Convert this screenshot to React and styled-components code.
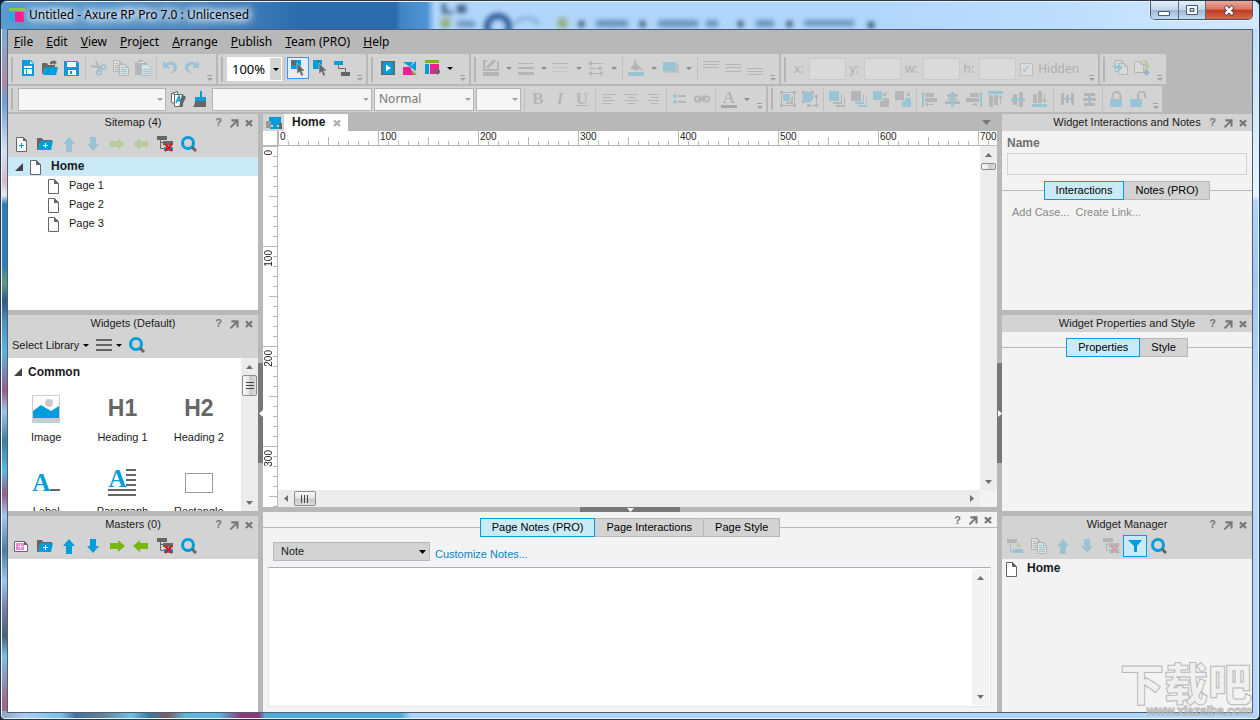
import React from 'react'
import styled, { createGlobalStyle, css } from 'styled-components'

const BLUE = '#009ddc'
const GRAY = '#666666'
const GREEN = '#76b80e'
const PINK = '#ef1f8f'

const UI_FONT = '"Liberation Sans", Arial, sans-serif'
const SYSTEM_FONT = '"Noto Sans", "Segoe UI", sans-serif'

const GlobalStyle = createGlobalStyle`
  * { box-sizing: border-box; }
  body {
    margin: 0;
    font: 11px/13px ${UI_FONT};
    color: #1a1a1a;
    background: #14233c;
  }
  button, input, select, textarea {
    margin: 0;
    padding: 0;
    font: inherit;
    color: inherit;
  }
`

/* ---------- icons ---------- */

const Pointer = ({ x = 7, y = 3 }) => (
  <path transform={`translate(${x} ${y})`} fill={GRAY} stroke="#dde" strokeWidth=".5" d="M0 0v11l2.5-2.3L4.3 13l2.2-1-1.8-4H8z" />
)

const PageLines = ({ x, y, accent }) => (
  <g transform={`translate(${x} ${y})`}>
    <path d="M.5.5h6l3 3v8h-9z" fill="#fff" stroke={GRAY} />
    <path d="M6.5.5v3h3M2 5.5h6M2 7.5h6M2 9.5h6M2 3.5h3" fill="none" stroke={accent || GRAY} />
  </g>
)

const BlankPage = ({ x, y }) => (
  <g transform={`translate(${x} ${y})`}>
    <path d="M.5.5h6l3 3v8h-9z" fill="#eee" stroke={GRAY} />
    <path d="M6.5.5v3h3" fill="none" stroke={GRAY} />
  </g>
)

const Cross = () => (
  <path d="M8 8l7 7M15 8l-7 7" stroke="#f00d0d" strokeWidth="2.2" fill="none" />
)

const Stack = ({ front, back }) => (
  <g>
    <path fill={front} d="M0 0h10v10H0z" />
    <path fill={back} d="M12 3h1v10H4v-2h8zM15 6h1v10H7v-2h8z" />
  </g>
)

const ICONS = {
  newFile: <g><path fill={BLUE} d="M2 0h9l3 4v12H2z" /><path fill="#fff" d="M4 6h8v2H4zM4 9h2v5H4zM7 9h5v5H7zM10 1l3 3h-3z" /></g>,
  open: <g><path fill={GRAY} d="M0 3h5l1 2h7v3H3L1 14H0zM8 4c0-3 2-3.5 4-3V0l3 2.5L12 5V3.5c-1.5 0-2 0-2.5 1z" /><path fill={BLUE} d="M3.5 7H16l-2 8H1z" /></g>,
  save: <g><path fill={BLUE} d="M0 1h13l2 2v13H0z" /><path fill="#fff" d="M3 2h9v5H3zM4 10h8v5H4z" /><path fill={BLUE} d="M6 11h2v3H6z" /></g>,
  cut: <g fill="none"><g stroke={BLUE} strokeWidth="1.8"><circle cx="12.5" cy="7" r="2.2" /><circle cx="8" cy="12.5" r="2.2" /></g><path stroke={GRAY} strokeWidth="2" d="M0 6l10.5 1.5M5 1l3.5 9.5" /></g>,
  copy: <g><PageLines x={0} y={0} /><PageLines x={6} y={4} accent={BLUE} /></g>,
  paste: <g><path fill={GRAY} d="M0 2h3V0h5v2h4v13H0z" /><path fill="#fff" d="M3 2h6v1H3z" /><g transform="translate(6 4)"><path d="M.5.5h6l3 3v8h-9z" fill="#fff" stroke={BLUE} /><path d="M2 5.5h6M2 7.5h6M2 9.5h6" stroke={BLUE} /></g></g>,
  undo: <path fill={BLUE} d="M1 1v7h7L5.6 5.6C8 4 12 4.5 12 8c0 2.5-2 4-4 6 4-1 7-3.5 7-7C15 2 8 0 3.8 3.5z" />,
  redo: <path fill={BLUE} d="M15 1v7H8l2.4-2.4C8 4 4 4.5 4 8c0 2.5 2 4 4 6-4-1-7-3.5-7-7C1 2 8 0 12.2 3.5z" />,
  selectTouch: <g><path fill={BLUE} d="M1 0h10v9H1z" /><path fill={GRAY} d="M1 0h5v5H1z" /><Pointer /></g>,
  selectInside: <g><path fill={BLUE} d="M1 0h9v9H1z" /><path fill={GRAY} d="M6 0h1v4H6z" /><Pointer /></g>,
  connector: <g><path fill={BLUE} d="M0 1h9v4H0z" /><path fill={GRAY} d="M7 12h9v4H7z" /><path d="M4.5 5v3.5h7V12" fill="none" stroke={GRAY} /></g>,
  preview: <g><path fill={GRAY} d="M1 1h14v14H1z" /><path fill={BLUE} d="M3 2h10v12H3z" /><path fill="#fff" d="M6 4.5L11 8l-5 3.5z" /></g>,
  share: <g><path fill={BLUE} d="M1 2h10L8 7z" /><path fill={BLUE} d="M14 1v10L8 7z" /><path fill={PINK} d="M1 15V7h7l4 8z" /><path fill={GREEN} d="M11 10l4 5h-3z" /></g>,
  generate: <g><path fill={GREEN} d="M1 0h14v3H1z" /><path fill={BLUE} d="M1 4h4v10H1z" /><path fill={PINK} d="M6 4h9v10H6z" /><path fill={GRAY} d="M9 10h4V8l4 3.5L13 15v-2H9z" /></g>,
  lineColor: <g><path d="M1 1v9h14V1" fill="none" stroke={GRAY} strokeWidth="2" /><path d="M4 8l8-8" stroke={GRAY} strokeWidth="3" /><path fill={GRAY} d="M0 12h16v4H0zM0 0h4v2H0z" /></g>,
  lineWidth: <path fill={GRAY} d="M0 3h16v1H0zM0 7h16v2H0zM0 12h16v3H0z" />,
  lineStyle: <g stroke={GRAY}><path d="M0 3.5h16" /><path d="M0 7.5h16" strokeDasharray="2 1" /><path d="M0 11.5h16" strokeDasharray="1 1" /></g>,
  arrows: <g><path d="M2 3.5h13M1 8.5h13M2 13.5h13" stroke={GRAY} /><path fill={GRAY} d="M0 3.5L4 1v5zM15 8.5L11 6v5zM0 13.5L4 11v5zM15 13.5L12 11v5z" /></g>,
  fill: <g><path fill={GRAY} d="M6 0h2v3l5 5-5 3-6-3 4-4zM13 7c2 2 2 3 1.5 4-1 .5-2-1-1.5-4z" /><path fill={BLUE} d="M0 12h16v4H0z" /></g>,
  shadow: <g><path fill={GRAY} opacity=".6" d="M2 4h14v9H2z" /><path fill={BLUE} d="M0 2h13v9H0z" /></g>,
  top: <path fill={GRAY} d="M0 1h16v1H0zM0 4h16v1H0zM0 7h16v1H0z" />,
  middle: <path fill={GRAY} d="M0 4h16v1H0zM0 7h16v1H0zM0 11h16v1H0z" />,
  bottom: <path fill={GRAY} d="M0 8h16v1H0zM0 11h16v1H0zM0 14h16v1H0z" />,
  masterOut: <g><BlankPage x={3} y={0} /><BlankPage x={6} y={3} /><path fill={BLUE} d="M0 5c3 0 4 1 6 1V3l5 4.5L6 12V9C3 9 1 8 0 5z" /></g>,
  masterIn: <g><BlankPage x={0} y={1} /><path d="M8 4.500h3.500V12M9 5" stroke={GRAY} fill="none" /><path fill={GREEN} d="M8 0c5 0 7 2 6.5 6H16l-2.5 3.5L10 7h2c0-3-1-5-4-7z" /><path fill="#0060b8" d="M12.5 9l3.5 3.5-3.5 3.5L9 12.500z" /></g>,
  styles: <g><path d="M1.5 2.5l6-2v3M4.5 3.5h8v12h-8z" fill="#fff" stroke={GRAY} /><path d="M1.5 2.5v9l3 1V3z" fill="#fff" stroke={GRAY} /><path d="M6 12l3-7 1.5 6M6.5 9.5h4" stroke={BLUE} fill="none" strokeWidth="1.5" /><path fill={GRAY} d="M12 3l4 3-4 9-3 1z" /></g>,
  brush: <g><path fill={BLUE} d="M8 0h2v6h4v4H3V6h5z" /><path fill={GRAY} d="M3 10h11v6H1c1.5-2 2-4 2-6z" /></g>,
  left: <path fill={GRAY} d="M2 3h12v1H2zM2 6h8v1H2zM2 9h12v1H2zM2 12h8v1H2z" />,
  center: <path fill={GRAY} d="M2 3h13v1H2zM5 6h7v1H5zM2 9h13v1H2zM5 12h7v1H5z" />,
  right: <path fill={GRAY} d="M2 3h12v1H2zM6 6h8v1H6zM2 9h12v1H2zM6 12h8v1H6z" />,
  bullets: <g><circle cx="3" cy="5" r="2" fill={BLUE} /><circle cx="3" cy="11" r="2" fill={BLUE} /><path fill={GRAY} d="M6 4h8v2H6zM6 10h8v2H6z" /></g>,
  link: <g fill="none" stroke={GRAY} strokeWidth="2"><rect x="1" y="5.5" width="6" height="5" rx="2" /><rect x="9" y="5.5" width="6" height="5" rx="2" /><path d="M4 8h8" /></g>,
  group: <g><path d="M1.5 1.5h13v13h-13z" fill="none" stroke={GRAY} /><path fill={GRAY} d="M0 0h3v3H0zM13 0h3v3h-3zM0 13h3v3H0zM13 13h3v3h-3zM11 6h2v7H6v-2h5z" /><path fill={BLUE} d="M3 3h7v7H3z" /></g>,
  ungroup: <g><path d="M7 14.5h7.5V6" fill="none" stroke={GRAY} /><path fill={GRAY} d="M0 0h3v3H0zM9 0h3v3H9zM0 9h3v3H0zM13 4h3v3h-3zM13 13h3v3h-3zM5 13h3v3H5z" /><circle cx="6" cy="6" r="5.5" fill={BLUE} /></g>,
  front: <Stack front={BLUE} back={GRAY} />,
  back: <Stack front={GRAY} back={BLUE} />,
  forward: <g><path fill={BLUE} d="M0 0h9v9H0z" /><path fill={GRAY} d="M7 10h3V7h6v9H7zM10 5V1l1.5 1.5C13 1 15 1 16 2c-2 0-3 0-3.5 1.5L14 5z" /></g>,
  backward: <g><path fill={GRAY} d="M0 0h9v9H0zM15 5V1l-1.5 1.5C12 1 11 1 10 2c2 0 2 0 2.5 1.5L11 5z" /><path fill={BLUE} d="M7 10h3V7h6v9H7z" /></g>,
  alignLeft: <g><path fill={BLUE} d="M0 1h2v15H0z" /><path fill={GRAY} d="M3 2h9v4H3zM3 7h12v4H3zM3 13.500l3-2v1.500h6v1H6v1.500z" /></g>,
  alignCenter: <g><path fill={GRAY} d="M3 3h11v3H3zM1 10h15v3H1z" /><path fill={BLUE} d="M7 1h3v15H7zM4 7h9v2H4z" /></g>,
  alignRight: <g><path fill={BLUE} d="M14 1h2v15h-2z" /><path fill={GRAY} d="M4 2h9v4H4zM0 7h13v4H0zM12 13.500l-3-2v1.500H5v1h4v1.500z" /></g>,
  alignTop: <g><path fill={BLUE} d="M0 0h15v3H0z" /><path fill={GRAY} d="M1 4h4v12H1zM6 4h4v10H6zM12.500 4l2.500 3h-2v6h-1V7h-2z" /></g>,
  alignMiddle: <g><path fill={GRAY} d="M3 3h4v11H3zM9 1h4v15H9z" /><path fill={BLUE} d="M1 7h14v3H1z" /></g>,
  alignBottom: <g><path fill={BLUE} d="M0 13h15v3H0z" /><path fill={GRAY} d="M1 3h4v9H1zM6 0h4v12H6zM12.500 12l2.500-3h-2V3h-1v6h-2z" /></g>,
  distH: <g><path fill={GRAY} d="M2 2h3v12H2zM7 4h3v8H7zM12 2h3v12h-3z" /><path fill={BLUE} d="M5 7h7v2H5z" /></g>,
  distV: <g><path fill={GRAY} d="M3 2h11v3H3zM2 7h13v3H2zM3 12h11v3H3z" /><path fill={BLUE} d="M7 5h3v2H7zM7 10h3v2H7z" /></g>,
  lock: <g><path d="M4.5 8V5a4 4 0 0 1 8 0v3" fill="none" stroke={GRAY} strokeWidth="2" /><path fill={BLUE} d="M2 8h12v8H2z" /></g>,
  unlock: <g><path d="M8 8V4a3.5 3.5 0 0 1 7 0v3" fill="none" stroke={GRAY} strokeWidth="2" /><path fill={BLUE} d="M0 8h12v8H0z" /></g>,
  addPage: <g><path d="M3.5 1.5h7l3 3v11h-10z" fill="#fff" stroke={GRAY} /><path fill={GRAY} d="M10 1l4 4h-4z" /><path stroke={BLUE} d="M6 9.5h5M8.5 7v5" /></g>,
  addFolder: <g><path fill={GRAY} d="M0 2h5l1 2h9v3H3l-2 7H0z" /><path fill={BLUE} d="M3.5 5H16l-2 9H1z" /><path stroke="#fff" d="M6 9.5h5M8.5 7v5" /></g>,
  up: <path fill={BLUE} d="M8 1l6 7h-3v8H5V8H2z" />,
  down: <path fill={BLUE} d="M8 15l6-7h-3V1H5v7H2z" />,
  indent: <path fill={GREEN} d="M16 8L9 2v3H1v6h8v3z" />,
  outdent: <path fill={GREEN} d="M0 8l7-6v3h8v6H7v3z" />,
  remove: <g><path fill={GRAY} d="M0 0h10v4H0zM6 5h10v4H6z" /><path d="M3.5 4v8.5H8M3.5 6.5H6" fill="none" stroke={GRAY} /><path fill={BLUE} d="M7 11h9v4H7z" /><Cross /></g>,
  search: <g><circle cx="7" cy="7" r="5.5" fill="none" stroke={BLUE} strokeWidth="3" /><path d="M11 11l4 4" stroke={GRAY} strokeWidth="3" /></g>,
  addMaster: <g><path d="M1.5 3.5h10l3 3v7h-13z" fill="#fff" stroke={GRAY} /><path fill="#ee83d7" d="M3 5h8v7H3z" /><path fill={GRAY} d="M11 3l4 4h-4z" /><path stroke="#fff" d="M5 8.5h5M7.5 6v5" /></g>,
  addState: <g><path fill={GRAY} d="M0 1h10v4H0z" /><path d="M3.5 5v8.5H6" fill="none" stroke={GRAY} /><path fill={BLUE} d="M6 11h10v4H6z" /><path stroke={GREEN} d="M9 7.5h5M11.5 5v5" /></g>,
  filter: <path fill={BLUE} d="M1 2h14L10 8v6H7V8z" />,
  menuLines: <path fill={GRAY} d="M0 2h16v2H0zM0 7h16v2H0zM0 12h16v2H0z" />,
  page: <g><path d="M3.5 1.5h6l4 4v10h-10z" fill="#fff" stroke={GRAY} /><path fill={GRAY} d="M9 1l5 5H9z" /></g>,
  twisty: <path fill="#444" d="M12 4v8H4z" />,
  dock: <path d="M5 5h7v7M12 5l-8 8" fill="none" stroke="currentColor" strokeWidth="2.4" />,
  close: <path d="M4.5 5l7 6.5M11.5 5l-7 6.5" stroke="currentColor" strokeWidth="2.5" />,
  device: <g><path fill={BLUE} d="M3 2h12v8H3zM7 10h4v2H7zM4 12h9v2H4z" /><path fill="#999" d="M0 6h5v7H0z" /><path fill={GRAY} d="M13 8h3v6h-3z" /></g>
}

const Svg = styled.svg`
  flex: none;
  display: block;
`

const Icon = ({ name, size = 16 }) => (
  <Svg width={size} height={size} viewBox="0 0 16 16" aria-hidden="true">{ICONS[name]}</Svg>
)

const Caret = styled.span`
  flex: none;
  border: solid transparent;
  border-width: 3px 3px 0;
  border-top-color: ${p => p.$color || '#000'};
`

/* ---------- window chrome ---------- */

const Window = styled.div`
  position: relative;
  display: flex;
  flex-direction: column;
  height: 100vh;
  min-height: 480px;
  padding: 0 7px 7px;
  overflow: hidden;
  border: 1px solid #2b3648;
  border-radius: 7px 7px 5px 5px;
  box-shadow: inset 0 0 0 1px #e8f4ff;
  background:
    linear-gradient(90deg, #8fa3c0 0, #a9cdf5 24px, #7cc0e8 60px, #44719d 75px, #60808f 100px, #71c1de 130px, #3f78a3 148px, #7c5c5c 166px, #5fb6dc 185px, #5fb6dc 218px, #8b3a7a 240px, #8b3a7a 258px, #50a9d8 264px, #50a9d8 400px, #b0d5fa 410px) bottom / 100% 8px no-repeat,
    linear-gradient(180deg, #5b9bd0 0, #86a9cc 40px, #b38aa4 80px, #6f9ed0 100px, #d6e2f5 150px, #d5b8c9 180px, #e8edf8 194px, #2e7eb9 203px, #2e7eb9 265px, #5c9e7c 282px, #30588c 300px, #4d8fbd 320px, #58b6e0 350px, #9c5c87 390px, #9cc4ee 410px, #3e7ea2 440px, #59b9e2 470px, #9a5c87 493px, #a5c8ef 515px, #4e7d9b 550px, #9fc6f3 580px, #7a86a8 605px, #46606f 635px, #7cc0e8 655px, #9d6a8c 700px) left / 8px 100% no-repeat,
    linear-gradient(180deg, #b7dafd 0, #e8f4ff 195px, #b0d5fa 200px, #9ec8f4 280px, #b5d8fc 400px);
`

const TitleBar = styled.header`
  display: flex;
  flex: none;
  align-items: center;
  position: relative;
  height: 28px;
  margin: 0 -7px;
  padding: 0 6px 0 8px;
  font: 12px/16px ${SYSTEM_FONT};
  color: #000;
  background:
    linear-gradient(90deg, #5b9bd0 0, #4d89c0 200px, #2b6cae 300px, #2a6cae 395px, #4085c6 400px, #4f94d2 426px, #b2d6fb 434px, #b2d6fb 70%, #bfdefd 85%, #d3e9ff 100%);
  box-shadow: inset 0 1px #e8f4ff;
`

const Backdrop = styled.svg`
  position: absolute;
  left: 430px;
  top: 1px;
`

const AppTitle = styled.h1`
  flex: 1;
  position: relative;
  margin: 0 0 0 4px;
  font: inherit;
  text-shadow: 0 0 6px #fff, 0 0 8px #fff, 0 0 10px #dcebf9, 0 0 12px #cfe4f8, 0 0 14px #cfe4f8;
`

const WindowButtons = styled.div`
  display: flex;
  align-self: flex-start;
  position: relative;
  border: 1px solid #45566f;
  border-top: 0;
  border-radius: 0 0 5px 5px;
  box-shadow: 0 0 0 1px #e4f2ff;
  overflow: hidden;
`

const WindowButton = styled.button`
  display: flex;
  align-items: center;
  justify-content: center;
  width: ${p => (p.$close ? 47 : 27)}px;
  height: 18px;
  border: 0;
  border-left: 1px solid #5b6b84;
  background: ${p => (p.$close
    ? 'linear-gradient(#e9a99b, #d87662 45%, #c23a23 52%, #d9694c)'
    : 'linear-gradient(#e3effa, #c3d5e9 48%, #9fb7d2 52%, #c6dcf2)')};
  &:first-child { border-left: 0; }
`

const Client = styled.div`
  display: flex;
  flex: 1;
  flex-direction: column;
  min-height: 0;
  border: 1px solid #4f5f70;
  margin: 0 -1px -1px;
  background: #b8b8b8;
`

const MenuBar = styled.nav`
  display: flex;
  gap: 13px;
  height: 24px;
  padding: 0 6px;
  align-items: center;
  font: 12px/16px ${SYSTEM_FONT};
`

const MenuLink = styled.a`
  color: #000;
  text-decoration: none;
`

/* ---------- toolbars ---------- */

const ToolbarRow = styled.div`
  display: flex;
  gap: 2px;
  margin-bottom: 2px;
  height: ${p => (p.$low ? 26 : 30)}px;
`

const ToolbarBox = styled.div`
  display: flex;
  align-items: ${p => (p.$low ? 'center' : 'flex-start')};
  height: 100%;
  padding: ${p => (p.$low ? '0' : '3px')} 0 0 3px;
  background: #d3d3d3;
`

const Grip = styled.span`
  flex: none;
  align-self: stretch;
  width: 2px;
  margin: ${p => (p.$low ? '2px' : '0')} 4px 2px 0;
  background: #b4b4b4;
`

const Separator = styled.span`
  flex: none;
  width: 1px;
  height: 23px;
  margin: 0 2px;
  background: #c0c0c0;
`

const ToolButton = styled.button`
  display: flex;
  flex: none;
  align-items: center;
  justify-content: center;
  width: ${p => p.$width || 22}px;
  height: 22px;
  border: 1px solid transparent;
  background: none;
  ${p => p.$active && css`
    border-color: ${p.$accent || '#3399ff'};
    background: ${p.$accent ? '#cbeaf8' : '#e5eef8'};
  `}
  &:disabled > svg, &:disabled > b { opacity: 0.27; }
`

const Glyph = styled.b`
  font: ${p => (p.$italic ? 'italic' : 'normal')} bold 17px/18px "Liberation Serif", serif;
  color: ${GRAY};
  text-decoration: ${p => (p.$underline ? 'underline' : 'none')};
  ${p => p.$bar && css`
    padding: 0 2px;
    line-height: 15px;
    border-bottom: 3px solid #333;
  `}
`

const ArrowButton = styled.button`
  display: flex;
  flex: none;
  align-items: center;
  justify-content: center;
  width: 13px;
  height: 22px;
  border: 0;
  background: none;
`

const Overflow = styled.button`
  display: flex;
  flex: none;
  flex-direction: column;
  align-items: center;
  align-self: flex-end;
  gap: 2px;
  width: 13px;
  height: 9px;
  border: 0;
  background: none;
  &::before { content: ''; width: 5px; height: 1px; background: #a0a0a0; }
`

const Tool = ({ tool }) => {
  const { icon, label, disabled, arrow, active, glyph } = tool
  return (
    <>
      <ToolButton type="button" aria-label={label} disabled={disabled} $active={active}>
        {glyph
          ? <Glyph $italic={glyph === 'I'} $underline={glyph === 'U'} $bar={glyph === 'A'}>{glyph}</Glyph>
          : <Icon name={icon} />}
      </ToolButton>
      {arrow && (
        <ArrowButton type="button" aria-label={`${label} options`} disabled={disabled}>
          <Caret $color={disabled ? '#8c8c8c' : '#000'} />
        </ArrowButton>
      )}
    </>
  )
}

const Tools = ({ items }) => items.map((tool, i) => (
  tool === '|' ? <Separator key={i} /> : <Tool key={i} tool={tool} />
))

const Toolbar = ({ low, children }) => (
  <ToolbarBox $low={low}>
    <Grip $low={low} />
    {children}
    <Overflow type="button" aria-label="More tools"><Caret $color="#a0a0a0" /></Overflow>
  </ToolbarBox>
)

const ComboBox = styled.span`
  display: flex;
  flex: none;
  align-items: center;
  width: ${p => p.$width}px;
  height: ${p => (p.$plain ? 24 : 23)}px;
  margin: ${p => (p.$plain ? '0' : '0 1px')};
  border: ${p => (p.$plain ? '1px solid #fff' : '1px solid #b4b4b4')};
  background: ${p => (p.$plain ? '#fff' : '#f6f6f6')};
  font: ${p => (p.$plain ? 13 : 12)}px/18px ${SYSTEM_FONT};
  color: ${p => (p.$plain ? '#000' : '#777')};
  select {
    appearance: none;
    flex: 1;
    min-width: 0;
    height: 100%;
    padding: 0 4px;
    border: 0;
    background: none;
    opacity: 1;
  }
`

const ComboArrow = styled.span`
  display: flex;
  align-items: center;
  justify-content: center;
  align-self: stretch;
  width: 11px;
  pointer-events: none;
  background: ${p => (p.$plain ? '#d3d3d3' : 'none')};
`

const Combo = ({ label, value = '', width, plain }) => (
  <ComboBox $width={width} $plain={plain}>
    <select aria-label={label} defaultValue={value} disabled={!plain}>
      <option value={value}>{value}</option>
    </select>
    <ComboArrow $plain={plain}><Caret $color={plain ? '#000' : '#a0a0a0'} /></ComboArrow>
  </ComboBox>
)

const Field = styled.label`
  display: flex;
  align-items: center;
  gap: 5px;
  height: 24px;
  margin: 0 ${p => (p.$last ? 6 : 0)}px 0 4px;
  font: 12px/16px ${SYSTEM_FONT};
  color: #aeaeae;
  input[type='text'] {
    width: 37px;
    height: 22px;
    border: 1px solid #c9c9c9;
    background: #dadada;
  }
`

const CheckBox = styled.input`
  appearance: none;
  width: 13px;
  height: 13px;
  border: 1px solid #bdbdbd;
  background: #dcdcdc;
  &:checked::after {
    content: '✓';
    display: block;
    font: bold 12px/11px "DejaVu Sans", sans-serif;
    color: #b4b4c4;
  }
`

/* ---------- workspace ---------- */

const Workspace = styled.main`
  display: flex;
  flex: 1;
  min-height: 0;
`

const SideColumn = styled.aside`
  display: flex;
  flex: none;
  flex-direction: column;
  gap: 5px;
  width: 250px;
`

const Splitter = styled.div`
  display: flex;
  flex: none;
  align-items: center;
  justify-content: center;
  width: ${p => (p.$flat ? 'auto' : '5px')};
  height: ${p => (p.$flat ? '5px' : 'auto')};
`

const SplitterHandle = styled.button`
  display: flex;
  align-items: center;
  justify-content: center;
  width: ${p => (p.$flat ? 100 : 5)}px;
  height: ${p => (p.$flat ? 5 : 100)}px;
  border: 0;
  background: #777;
`

const PanelBox = styled.section`
  display: flex;
  flex: 1 1 0;
  flex-direction: column;
  min-height: 0;
  background: ${p => (p.$white ? '#fff' : '#f3f3f3')};
`

const PanelTitle = styled.div`
  display: grid;
  grid-template-columns: 1fr auto 1fr;
  align-items: center;
  flex: none;
  height: 17px;
  background: #d3d3d3;
  h2 {
    grid-column: 2;
    margin: 0;
    font-size: 11px;
    font-weight: normal;
  }
`

const PanelActions = styled.div`
  display: flex;
  justify-self: end;
  padding-right: 2px;
`

const PanelAction = styled.button`
  display: flex;
  align-items: center;
  justify-content: center;
  width: 15px;
  height: 16px;
  border: 0;
  background: none;
  font-weight: bold;
  color: #777;
`

const PanelTools = styled.div`
  display: flex;
  flex: none;
  align-items: center;
  height: 26px;
  padding-left: 1px;
  background: #d3d3d3;
`

const Actions = () => (
  <PanelActions>
    <PanelAction type="button" aria-label="Help">?</PanelAction>
    <PanelAction type="button" aria-label="Undock"><Icon name="dock" size={14} /></PanelAction>
    <PanelAction type="button" aria-label="Close"><Icon name="close" size={14} /></PanelAction>
  </PanelActions>
)

const Panel = ({ title, tools, white, children }) => (
  <PanelBox $white={white} aria-label={title}>
    <PanelTitle>
      <h2>{title}</h2>
      <Actions />
    </PanelTitle>
    {tools && <PanelTools>{tools}</PanelTools>}
    {children}
  </PanelBox>
)

const TreeRow = styled.div`
  display: flex;
  align-items: center;
  height: 19px;
  padding-left: ${p => p.$indent || 0}px;
  font-size: ${p => (p.$bold ? 12 : 11)}px;
  font-weight: ${p => (p.$bold ? 'bold' : 'normal')};
  background: ${p => (p.$selected ? '#cbeaf8' : 'none')};
  > span { margin-left: 8px; }
`

const TextButton = styled.button`
  display: flex;
  align-items: center;
  gap: 4px;
  height: 20px;
  padding: 0 4px 0 3px;
  border: 0;
  background: none;
`

const WidgetBody = styled.div`
  display: flex;
  flex: 1;
  min-height: 0;
`

const WidgetList = styled.div`
  flex: 1;
  overflow: hidden;
`

const GroupTitle = styled.h3`
  display: flex;
  align-items: center;
  gap: 2px;
  height: 28px;
  margin: 0;
  padding-left: 2px;
  font-size: 12px;
`

const WidgetGrid = styled.div`
  display: grid;
  grid-template-columns: repeat(3, 1fr);
  padding-right: 4px;
`

const WidgetItem = styled.div`
  display: flex;
  flex-direction: column;
  align-items: center;
  height: 74px;
  white-space: nowrap;
`

const WidgetArt = styled.div`
  display: flex;
  align-items: center;
  justify-content: center;
  height: 45px;
  font-size: 23px;
  font-weight: bold;
  color: ${GRAY};
`

const SerifA = styled.b`
  font: bold 25px/24px "Liberation Serif", serif;
  color: ${BLUE};
`

const LabelArt = styled.span`
  display: flex;
  align-items: baseline;
  &::after { content: ''; width: 10px; height: 2px; background: ${GRAY}; }
`

const ParagraphArt = styled.span`
  display: grid;
  grid-template-columns: 18px 10px;
  width: 28px;
  padding-bottom: 1px;
  &::before {
    content: '';
    order: 1;
    height: 18px;
    background: repeating-linear-gradient(${GRAY} 0 2px, transparent 2px 5px);
  }
  &::after {
    content: '';
    order: 2;
    grid-column: 1 / 3;
    height: 7px;
    background: repeating-linear-gradient(${GRAY} 0 2px, transparent 2px 5px);
  }
  b { line-height: 20px; height: 20px; }
`

const RectangleArt = styled.span`
  width: 28px;
  height: 20px;
  border: 1px solid #999;
`

/* ---------- scrollbars ---------- */

const ScrollTrack = styled.div`
  display: flex;
  flex: none;
  flex-direction: ${p => (p.$flat ? 'row' : 'column')};
  align-items: center;
  width: ${p => (p.$flat ? 'auto' : '17px')};
  height: ${p => (p.$flat ? '17px' : 'auto')};
  background: ${p => (p.$light ? '#f3f3f3' : '#ececec')};
`

const ScrollArrow = styled.button`
  display: flex;
  flex: none;
  align-items: center;
  justify-content: center;
  width: 16px;
  height: 17px;
  border: 0;
  background: none;
`

const Thumb = styled.div`
  display: flex;
  flex: none;
  align-items: center;
  justify-content: center;
  width: ${p => p.$w}px;
  height: ${p => p.$h}px;
  margin-bottom: ${p => (p.$flat ? '0' : 'auto')};
  border: 1px solid #8e8e8e;
  border-radius: 2px;
  background: linear-gradient(${p => (p.$flat ? '180deg' : '90deg')}, #fafafa, #e6e6e6 45%, #c8c8ca 55%, #dcdcdc);
`

const Spacer = styled.span`
  flex: 1;
`

const ARROWS = {
  up: 'M3.5 0L7 4H0z',
  down: 'M0 0h7L3.5 4z',
  left: 'M4 0v7L0 3.5z',
  right: 'M0 0l4 3.5L0 7z'
}

const Arrow = ({ dir, color = '#707070' }) => {
  const flat = dir === 'up' || dir === 'down'
  return (
    <Svg width={flat ? 7 : 4} height={flat ? 4 : 7} aria-hidden="true">
      <path fill={color} d={ARROWS[dir]} />
    </Svg>
  )
}

const Ribs = ({ flat }) => (
  <Svg width="8" height="8" aria-hidden="true">
    <path stroke="#444" d={flat ? 'M.5 0v8M3.5 0v8M6.5 0v8' : 'M0 .5h8M0 3.5h8M0 6.5h8'} />
  </Svg>
)

const VScroll = ({ thumb, light }) => (
  <ScrollTrack $light={light}>
    <ScrollArrow type="button" aria-label="Scroll up"><Arrow dir="up" /></ScrollArrow>
    {thumb ? <Thumb $w={15} $h={thumb}>{thumb > 12 && <Ribs />}</Thumb> : <Spacer />}
    <ScrollArrow type="button" aria-label="Scroll down"><Arrow dir="down" /></ScrollArrow>
  </ScrollTrack>
)

/* ---------- canvas ---------- */

const CenterColumn = styled.div`
  display: flex;
  flex: 1;
  flex-direction: column;
  min-width: 0;
`

const TabStrip = styled.div`
  display: flex;
  flex: none;
  align-items: center;
  height: 17px;
  padding-right: 6px;
`

const DeviceButton = styled.button`
  display: flex;
  align-items: center;
  justify-content: center;
  width: 21px;
  height: 17px;
  border: 0;
  background: #d3d3d3;
`

const DocTab = styled.button`
  display: flex;
  align-items: center;
  gap: 5px;
  height: 17px;
  padding: 0 4px 0 8px;
  border: 0;
  background: #fff;
  font-weight: bold;
  font-size: 12px;
  svg { color: #b0b0b0; }
`

const CanvasGrid = styled.div`
  display: grid;
  grid-template: 15px minmax(0, 1fr) / 15px minmax(0, 1fr);
  flex: 1;
  min-height: 0;
  background: #fff;
`

const Corner = styled.div`
  border: solid #b8b8b8;
  border-width: 0 1px 1px 0;
`

const Ruler = styled.div`
  display: flex;
  flex-direction: ${p => (p.$vertical ? 'column' : 'row')};
  overflow: hidden;
  border: 0 solid #b8b8b8;
  border-width: ${p => (p.$vertical ? '0 1px 0 0' : '0 0 1px 0')};
`

const RulerUnit = styled.div`
  flex: none;
  font-size: 10px;
  line-height: 11px;
  color: #222;
  --tick: #b8b8b8 0 1px, transparent 1px;
  ${p => (p.$vertical ? css`
    width: 14px;
    height: 100px;
    background:
      linear-gradient(var(--tick)) left top / 14px 100px no-repeat,
      linear-gradient(var(--tick)) 6px 50px / 9px 50px no-repeat,
      repeating-linear-gradient(var(--tick) 10px) right top / 4px 100% no-repeat;
    span {
      display: block;
      padding-bottom: 4px;
      writing-mode: vertical-rl;
      transform: rotate(180deg);
    }
  ` : css`
    width: 100px;
    height: 14px;
    padding-left: 2px;
    background:
      linear-gradient(90deg, var(--tick)) left top / 100px 14px no-repeat,
      linear-gradient(90deg, var(--tick)) 50px 6px / 50px 9px no-repeat,
      repeating-linear-gradient(90deg, var(--tick) 10px) left bottom / 100% 4px no-repeat;
  `)}
`

const CanvasBody = styled.div`
  display: grid;
  grid-template: minmax(0, 1fr) 17px / minmax(0, 1fr) 17px;
`

const ScrollCorner = styled.div`
  background: #f3f3f3;
`

/* ---------- inspector ---------- */

const TabLine = styled.div`
  display: flex;
  flex: none;
  align-items: center;
  margin-top: 6px;
  &::before, &::after {
    content: '';
    flex: 1;
    height: 1px;
    background: #b8b8b8;
  }
`

const SwitchTab = styled.button`
  height: 19px;
  padding: 0 11px;
  margin-left: ${p => (p.$active ? 0 : -1)}px;
  border: 1px solid ${p => (p.$active ? BLUE : '#b8b8b8')};
  background: ${p => (p.$active ? '#cbeaf8' : '#d3d3d3')};
  position: relative;
  z-index: ${p => (p.$active ? 1 : 0)};
  color: #000;
`

const Tabs = ({ items }) => (
  <TabLine>
    {items.map((item, i) => (
      <SwitchTab key={item} type="button" aria-pressed={i === 0} $active={i === 0}>{item}</SwitchTab>
    ))}
  </TabLine>
)

const NameField = styled.label`
  display: flex;
  flex-direction: column;
  gap: 3px;
  padding: 6px 5px 0;
  font-size: 12px;
  font-weight: bold;
  color: #707070;
  input {
    height: 22px;
    border: 1px solid #d3d3d3;
    background: #f3f3f3;
  }
`

const LinkRow = styled.div`
  display: flex;
  gap: 6px;
  padding: 6px 10px;
`

const ActionLink = styled.a`
  color: ${p => (p.$muted ? '#888' : '#0a84c1')};
  text-decoration: none;
`

const PageNotes = styled.section`
  display: flex;
  flex: none;
  flex-direction: column;
  position: relative;
  height: 200px;
  background: #f3f3f3;
  > ${PanelActions} {
    position: absolute;
    top: 0;
    right: 0;
  }
`

const NotesBar = styled.div`
  display: flex;
  align-items: flex-end;
  gap: 5px;
  padding: 5px 10px 6px;
`

const NoteSelect = styled.span`
  display: flex;
  align-items: center;
  width: 157px;
  height: 19px;
  padding-right: 3px;
  border: 1px solid #b8b8b8;
  background: #d3d3d3;
  select {
    appearance: none;
    flex: 1;
    padding: 0 7px;
    border: 0;
    background: none;
  }
`

const NotesEditor = styled.div`
  display: flex;
  flex: 1;
  margin: 0 6px 5px 5px;
  border: 1px solid #e2e6ee;
  border-top-color: #ababb3;
  background: #fff;
  padding: 1px;
  textarea {
    flex: 1;
    border: 0;
    resize: none;
    background: none;
  }
`

const Watermark = styled.div`
  position: absolute;
  right: 7px;
  bottom: 2px;
  display: flex;
  flex-direction: column;
  align-items: flex-end;
  pointer-events: none;
  color: rgba(235, 235, 235, 0.4);
  -webkit-text-stroke: 1px rgba(170, 170, 170, 0.8);
  font: 900 44px/46px "Noto Sans CJK SC", sans-serif;
  small {
    font: bold 12px/12px ${UI_FONT};
  }
`

const off = (icon, label, extra) => ({ icon, label, disabled: true, ...extra })

const FILE_TOOLS = [
  { icon: 'newFile', label: 'New' }, { icon: 'open', label: 'Open' }, { icon: 'save', label: 'Save' }, '|',
  off('cut', 'Cut'), off('copy', 'Copy'), off('paste', 'Paste'), '|',
  off('undo', 'Undo'), off('redo', 'Redo')
]

const SELECT_TOOLS = [
  '|',
  { icon: 'selectTouch', label: 'Intersected mode', active: true },
  { icon: 'selectInside', label: 'Contained mode' },
  { icon: 'connector', label: 'Connector mode' }
]

const PUBLISH_TOOLS = [
  { icon: 'preview', label: 'Preview' },
  { icon: 'share', label: 'Share' },
  { icon: 'generate', label: 'Publish', arrow: true }
]

const SHAPE_TOOLS = [
  off('lineColor', 'Line color', { arrow: true }), off('lineWidth', 'Line width', { arrow: true }),
  off('lineStyle', 'Line style', { arrow: true }), off('arrows', 'Arrow style', { arrow: true }), '|',
  off('fill', 'Fill color', { arrow: true }), off('shadow', 'Shadow', { arrow: true }), '|',
  off('top', 'Align text top'), off('middle', 'Align text middle'), off('bottom', 'Align text bottom')
]

const MASTER_TOOLS = [off('masterOut', 'Previous'), off('masterIn', 'Next')]

const STYLE_TOOLS = [{ icon: 'styles', label: 'Style editor' }, { icon: 'brush', label: 'Format painter' }]

const TEXT_TOOLS = [
  '|', { glyph: 'B', label: 'Bold', disabled: true }, { glyph: 'I', label: 'Italic', disabled: true },
  { glyph: 'U', label: 'Underline', disabled: true }, '|',
  off('left', 'Text left'), off('center', 'Text center'), off('right', 'Text right'), '|',
  off('bullets', 'Bullets'), off('link', 'Insert link'), '|',
  { glyph: 'A', label: 'Text color', disabled: true, arrow: true }
]

const ARRANGE_TOOLS = [
  off('group', 'Group'), off('ungroup', 'Ungroup'), '|',
  off('front', 'Bring to front'), off('back', 'Send to back'),
  off('forward', 'Bring forward'), off('backward', 'Send backward'), '|',
  off('alignLeft', 'Align left'), off('alignCenter', 'Align center'), off('alignRight', 'Align right'),
  off('alignTop', 'Align top'), off('alignMiddle', 'Align middle'), off('alignBottom', 'Align bottom'), '|',
  off('distH', 'Distribute horizontally'), off('distV', 'Distribute vertically'), '|',
  off('lock', 'Lock'), off('unlock', 'Unlock')
]

const MENU = ['File', 'Edit', 'View', 'Project', 'Arrange', 'Publish', 'Team (PRO)', 'Help']

const treeTools = (first, firstLabel, disabled) => [
  { icon: first, label: firstLabel },
  { icon: 'addFolder', label: 'Add folder' },
  { icon: 'up', label: 'Move up', disabled },
  { icon: 'down', label: 'Move down', disabled },
  { icon: 'indent', label: 'Indent', disabled },
  { icon: 'outdent', label: 'Outdent', disabled },
  { icon: 'remove', label: 'Delete' },
  { icon: 'search', label: 'Search' }
]

const MANAGER_TOOLS = [
  off('addState', 'Add state'), off('copy', 'Duplicate state'), off('up', 'Move up'),
  off('down', 'Move down'), off('remove', 'Delete'),
  { icon: 'filter', label: 'Filter', active: true }, { icon: 'search', label: 'Search' }
]

const PanelToolList = ({ items }) => items.map(({ icon, label, disabled, active }) => (
  <ToolButton
    key={icon}
    type="button"
    aria-label={label}
    disabled={disabled}
    $width={24}
    $active={active}
    $accent={BLUE}
  >
    <Icon name={icon} />
  </ToolButton>
))

const WIDGETS = [
  {
    name: 'Image',
    art: (
      <Svg width="28" height="28" aria-hidden="true">
        <path fill="#fff" stroke="#ccc" d="M.5.5h27v27H.5z" />
        <path fill="#ccc" d="M0 23h28v5H0z" />
        <circle cx="17" cy="8" r="4" fill="#ccc" />
        <path fill={BLUE} d="M1 16l8-6 10 6 8-5v12H1z" />
      </Svg>
    )
  },
  { name: 'Heading 1', art: 'H1' },
  { name: 'Heading 2', art: 'H2' },
  { name: 'Label', art: <LabelArt><SerifA>A</SerifA></LabelArt> },
  { name: 'Paragraph', art: <ParagraphArt><SerifA>A</SerifA></ParagraphArt> },
  { name: 'Rectangle', art: <RectangleArt /> }
]

const Header = () => (
  <TitleBar>
    <Backdrop width="480" height="27" aria-hidden="true">
      <defs>
        <filter id="frost" x="-20%" y="-50%" width="140%" height="200%">
          <feGaussianBlur stdDeviation="2.5" />
        </filter>
      </defs>
      <g filter="url(#frost)">
        <path fill="#1e3e66" opacity=".8" d="M11 1h4v8h7v3H11zM26 3h9v8h-9z" />
        <path fill="#8aa860" opacity=".8" d="M10 16h9v10h-9zM127 16h9v10h-9z" />
        <path fill="#3c6490" opacity=".6" d="M26 19h18v6H26zM165 18h32v7h-32zM227 18h40v7h-40zM275 18h12v7h-12zM325 18h18v7h-18zM373 18h50v6h-50z" />
        <circle cx="67" cy="25" r="11" fill="none" stroke="#2a5a94" strokeWidth="6" />
        <path d="M84 22c6-8 16-8 24 0" fill="none" stroke="#5f8ab8" strokeWidth="2" />
        <path fill="#28415f" d="M148 19h5v6h-5zM209 19h5v6h-5zM307 19h5v6h-5zM356 19h5v6h-5zM437 20h6v6h-6z" />
      </g>
    </Backdrop>
    <Svg width="16" height="16" aria-hidden="true">
      <path fill="#8cc63f" d="M0 1h16v3H0z" />
      <path fill="#27aae1" d="M0 5h5v10H0z" />
      <path fill={PINK} d="M6 5h9v10H6z" />
    </Svg>
    <AppTitle>Untitled - Axure RP Pro 7.0 : Unlicensed</AppTitle>
    <WindowButtons>
      <WindowButton type="button" aria-label="Minimize">
        <Svg width="13" height="13"><path fill="#fff" stroke="#4b5a70" d="M.5 7.5h11v4H.5z" /></Svg>
      </WindowButton>
      <WindowButton type="button" aria-label="Maximize">
        <Svg width="13" height="13"><path fill="#fff" fillRule="evenodd" stroke="#4b5a70" d="M.5 1.5h11v9H.5zM4 4.5v3h4v-3z" /></Svg>
      </WindowButton>
      <WindowButton type="button" aria-label="Close" $close>
        <Svg width="13" height="13">
          <path d="M2 2.5l8 8M10 2.5l-8 8" stroke="#53404a" strokeWidth="4.5" />
          <path d="M2.5 3l7 7M9.5 3l-7 7" stroke="#fff" strokeWidth="2.5" />
        </Svg>
      </WindowButton>
    </WindowButtons>
  </TitleBar>
)

const RulerUnits = ({ count, vertical }) => (
  <Ruler $vertical={vertical}>
    {Array.from({ length: count }, (_, i) => (
      <RulerUnit key={i} $vertical={vertical}><span>{i * 100}</span></RulerUnit>
    ))}
  </Ruler>
)

const Canvas = () => (
  <CanvasGrid>
    <Corner />
    <RulerUnits count={8} />
    <RulerUnits count={4} vertical />
    <CanvasBody>
      <div />
      <VScroll thumb={7} />
      <ScrollTrack $flat>
        <ScrollArrow type="button" aria-label="Scroll left"><Arrow dir="left" /></ScrollArrow>
        <Thumb $w={22} $h={15} $flat><Ribs flat /></Thumb>
        <Spacer />
        <ScrollArrow type="button" aria-label="Scroll right"><Arrow dir="right" /></ScrollArrow>
      </ScrollTrack>
      <ScrollCorner />
    </CanvasBody>
  </CanvasGrid>
)

export default function App() {
  return (
    <Window>
      <GlobalStyle />
      <Header />
      <Client>
        <MenuBar>
          {MENU.map(name => (
            <MenuLink key={name} href="#"><u>{name[0]}</u>{name.slice(1)}</MenuLink>
          ))}
        </MenuBar>
        <ToolbarRow>
          <Toolbar><Tools items={FILE_TOOLS} /></Toolbar>
          <Toolbar>
            <Combo label="Zoom" value="100%" width={55} plain />
            <Tools items={SELECT_TOOLS} />
          </Toolbar>
          <Toolbar><Tools items={PUBLISH_TOOLS} /></Toolbar>
          <Toolbar><Tools items={SHAPE_TOOLS} /></Toolbar>
          <Toolbar>
            {['x:', 'y:', 'w:', 'h:'].map(name => (
              <Field key={name}>{name}<input type="text" disabled /></Field>
            ))}
            <Field $last><CheckBox type="checkbox" defaultChecked disabled />Hidden</Field>
          </Toolbar>
          <Toolbar><Tools items={MASTER_TOOLS} /></Toolbar>
        </ToolbarRow>
        <ToolbarRow $low>
          <Toolbar low>
            <Combo label="Widget style" width={148} />
            <Tools items={STYLE_TOOLS} />
            <Combo label="Font family" width={160} />
            <Combo label="Font typeface" value="Normal" width={100} />
            <Combo label="Font size" width={45} />
            <Tools items={TEXT_TOOLS} />
          </Toolbar>
          <Toolbar low><Tools items={ARRANGE_TOOLS} /></Toolbar>
        </ToolbarRow>

        <Workspace>
          <SideColumn>
            <Panel
              title="Sitemap (4)"
              white
              tools={<PanelToolList items={treeTools('addPage', 'Add page', true)} />}
            >
              <TreeRow $bold $selected $indent={3}>
                <Icon name="twisty" /><Icon name="page" /><span>Home</span>
              </TreeRow>
              {['Page 1', 'Page 2', 'Page 3'].map(name => (
                <TreeRow key={name} $indent={37}><Icon name="page" /><span>{name}</span></TreeRow>
              ))}
            </Panel>
            <Panel
              title="Widgets (Default)"
              white
              tools={(
                <>
                  <TextButton type="button">Select Library <Caret /></TextButton>
                  <TextButton type="button" aria-label="Library options">
                    <Icon name="menuLines" /><Caret />
                  </TextButton>
                  <ToolButton type="button" aria-label="Search"><Icon name="search" /></ToolButton>
                </>
              )}
            >
              <WidgetBody>
                <WidgetList>
                  <GroupTitle><Icon name="twisty" />Common</GroupTitle>
                  <WidgetGrid>
                    {WIDGETS.map(({ name, art }) => (
                      <WidgetItem key={name}><WidgetArt>{art}</WidgetArt>{name}</WidgetItem>
                    ))}
                  </WidgetGrid>
                </WidgetList>
                <VScroll thumb={21} />
              </WidgetBody>
            </Panel>
            <Panel
              title="Masters (0)"
              white
              tools={<PanelToolList items={treeTools('addMaster', 'Add master')} />}
            />
          </SideColumn>

          <Splitter>
            <SplitterHandle type="button" aria-label="Collapse left"><Arrow dir="left" color="#fff" /></SplitterHandle>
          </Splitter>

          <CenterColumn>
            <TabStrip>
              <DeviceButton type="button" aria-label="Adaptive views"><Icon name="device" /></DeviceButton>
              <DocTab type="button">Home<Icon name="close" size={14} /></DocTab>
              <Spacer />
              <Svg width="9" height="5" aria-hidden="true"><path fill="#777" d="M0 0h9L4.5 5z" /></Svg>
            </TabStrip>
            <Canvas />
            <Splitter $flat>
              <SplitterHandle type="button" aria-label="Collapse notes" $flat><Arrow dir="down" color="#fff" /></SplitterHandle>
            </Splitter>
            <PageNotes aria-label="Page notes">
              <Tabs items={['Page Notes (PRO)', 'Page Interactions', 'Page Style']} />
              <Actions />
              <NotesBar>
                <NoteSelect>
                  <select aria-label="Note"><option>Note</option></select>
                  <Svg width="7" height="4" aria-hidden="true"><path d="M0 0h7L3.5 4z" /></Svg>
                </NoteSelect>
                <ActionLink href="#">Customize Notes...</ActionLink>
              </NotesBar>
              <NotesEditor>
                <textarea aria-label="Page note text" />
                <VScroll light />
              </NotesEditor>
            </PageNotes>
          </CenterColumn>

          <Splitter>
            <SplitterHandle type="button" aria-label="Collapse right"><Arrow dir="right" color="#fff" /></SplitterHandle>
          </Splitter>

          <SideColumn>
            <Panel title="Widget Interactions and Notes">
              <NameField>Name<input type="text" /></NameField>
              <Tabs items={['Interactions', 'Notes (PRO)']} />
              <LinkRow>
                <ActionLink href="#" $muted>Add Case...</ActionLink>
                <ActionLink href="#" $muted>Create Link...</ActionLink>
              </LinkRow>
            </Panel>
            <Panel title="Widget Properties and Style">
              <Tabs items={['Properties', 'Style']} />
            </Panel>
            <Panel title="Widget Manager" tools={<PanelToolList items={MANAGER_TOOLS} />}>
              <TreeRow $bold $indent={1}><Icon name="page" /><span>Home</span></TreeRow>
            </Panel>
          </SideColumn>
        </Workspace>
      </Client>
      <Watermark aria-hidden="true">
        下载吧
        <small>www.xiazaiba.com</small>
      </Watermark>
    </Window>
  )
}
